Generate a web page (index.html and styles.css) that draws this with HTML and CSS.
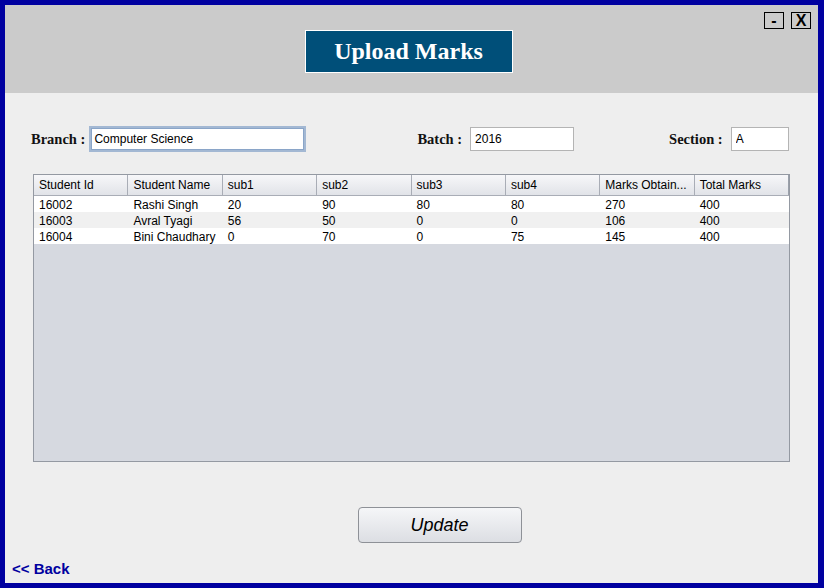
FILE: index.html
```html
<!DOCTYPE html>
<html>
<head>
<meta charset="utf-8">
<link rel="stylesheet" href="styles.css">
</head>
<body>
<div class="frame">
  <div class="header">
    <div class="winbtns">
      <span class="wbtn">-</span>
      <span class="wbtn">X</span>
    </div>
    <div class="title">Upload Marks</div>
  </div>
  <div class="content">
    <div class="filters">
      <div class="field f-branch"><label>Branch :</label><input class="inp focus w-branch" value="Computer Science"></div>
      <div class="field f-batch"><label>Batch :</label><input class="inp w-batch" value="2016"></div>
      <div class="field f-section"><label>Section :</label><input class="inp w-section" value="A"></div>
    </div>
    <div class="table">
      <div class="thead">
        <div>Student Id</div><div>Student Name</div><div>sub1</div><div>sub2</div><div>sub3</div><div>sub4</div><div>Marks Obtain...</div><div>Total Marks</div>
      </div>
      <div class="row">
        <div>16002</div><div>Rashi Singh</div><div>20</div><div>90</div><div>80</div><div>80</div><div>270</div><div>400</div>
      </div>
      <div class="row alt">
        <div>16003</div><div>Avral Tyagi</div><div>56</div><div>50</div><div>0</div><div>0</div><div>106</div><div>400</div>
      </div>
      <div class="row">
        <div>16004</div><div>Bini Chaudhary</div><div>0</div><div>70</div><div>0</div><div>75</div><div>145</div><div>400</div>
      </div>
    </div>
    <div class="actions">
      <button class="update">Update</button>
    </div>
    <div class="back">&lt;&lt; Back</div>
  </div>
</div>
</body>
</html>
```
FILE: styles.css
```css
html, body { margin: 0; padding: 0; }
body { width: 824px; height: 588px; overflow: hidden; background: #0000a0; }
.frame {
  box-sizing: border-box;
  width: 824px; height: 588px;
  border-style: solid; border-color: #0000a0;
  border-width: 5px 6px 5px 5px;
  display: flex; flex-direction: column;
  background: #eeeeee;
}
.header {
  height: 88px; background: #cbcbcb;
  position: relative;
  display: flex; justify-content: center; align-items: flex-start;
}
.winbtns { position: absolute; right: 7px; top: 7px; display: flex; gap: 7px; }
.wbtn {
  box-sizing: border-box; width: 20px; height: 17px;
  border: 1px solid #000; background: #cbcbcb;
  font: bold 16px/15px "Liberation Sans Narrow", "Liberation Sans", sans-serif; text-align: center; color: #000;
}
.title {
  margin-top: 25px; margin-right: 6px;
  box-sizing: border-box; width: 208px; height: 43px;
  background: #004f79; border: 1px solid #fff;
  color: #fff; font: bold 24px/40px "Liberation Serif", serif; text-align: center;
}
.content { flex: 1; display: flex; flex-direction: column; }
.filters { height: 81px; display: flex; align-items: flex-start; padding-top: 33px; box-sizing: border-box; }
.field { display: flex; align-items: center; }
.field label { font: bold 14.5px "Liberation Serif", serif; color: #111; margin-right: 8px; }
.f-branch { margin-left: 26px; }
.f-branch label { margin-right: 4px; }
.f-batch { margin-left: 111px; margin-top: 1px; }
.f-section { margin-left: 95px; margin-top: 1px; }
.inp {
  box-sizing: border-box; height: 24px; padding: 0 4px;
  border: 1px solid #b4b4b4; background: #fff;
  font: 12px "Liberation Sans", sans-serif; color: #000; outline: none;
}
.w-branch { width: 217px; }
.w-batch { width: 104px; }
.w-section { width: 58px; }
.inp.focus { height: 26px; border: 2px solid #a3b8d3; box-shadow: inset 0 0 0 1px #8aa5c8; padding: 0 3px; }
.table {
  margin-left: 28px; width: 757px; height: 288px; box-sizing: border-box;
  border: 1px solid #9499a2; background: #d6d9e0;
  font: 12px "Liberation Sans", sans-serif; color: #000;
}
.thead, .row { display: grid; grid-template-columns: repeat(8, 1fr); }
.thead {
  height: 21px; box-sizing: border-box;
  background: linear-gradient(#f7f7f9, #e1e3e8);
  border-bottom: 1px solid #a9adb6;
}
.thead div { line-height: 20px; padding-left: 5px; border-right: 1px solid #a9adb6; white-space: nowrap; overflow: hidden; }
.thead div:last-child { border-right: 1px solid #9aa0aa; }
.row { height: 16px; background: #fff; }
.row.alt { background: #f0f0f0; }
.row div { line-height: 16px; padding: 1px 0 0 5px; height: 15px; white-space: nowrap; overflow: visible; }
.actions { display: flex; justify-content: center; margin-top: 45px; }
.update {
  width: 164px; height: 36px; margin-left: 56px;
  border: 1px solid #8e9197; border-radius: 4px;
  background: linear-gradient(#f5f6f8, #dcdee3);
  font: italic 18px "Liberation Sans", sans-serif; color: #000;
}
.back { margin-top: auto; margin-left: 7px; margin-bottom: 6px; font: bold 15px "Liberation Sans", sans-serif; color: #0000a0; }
```
